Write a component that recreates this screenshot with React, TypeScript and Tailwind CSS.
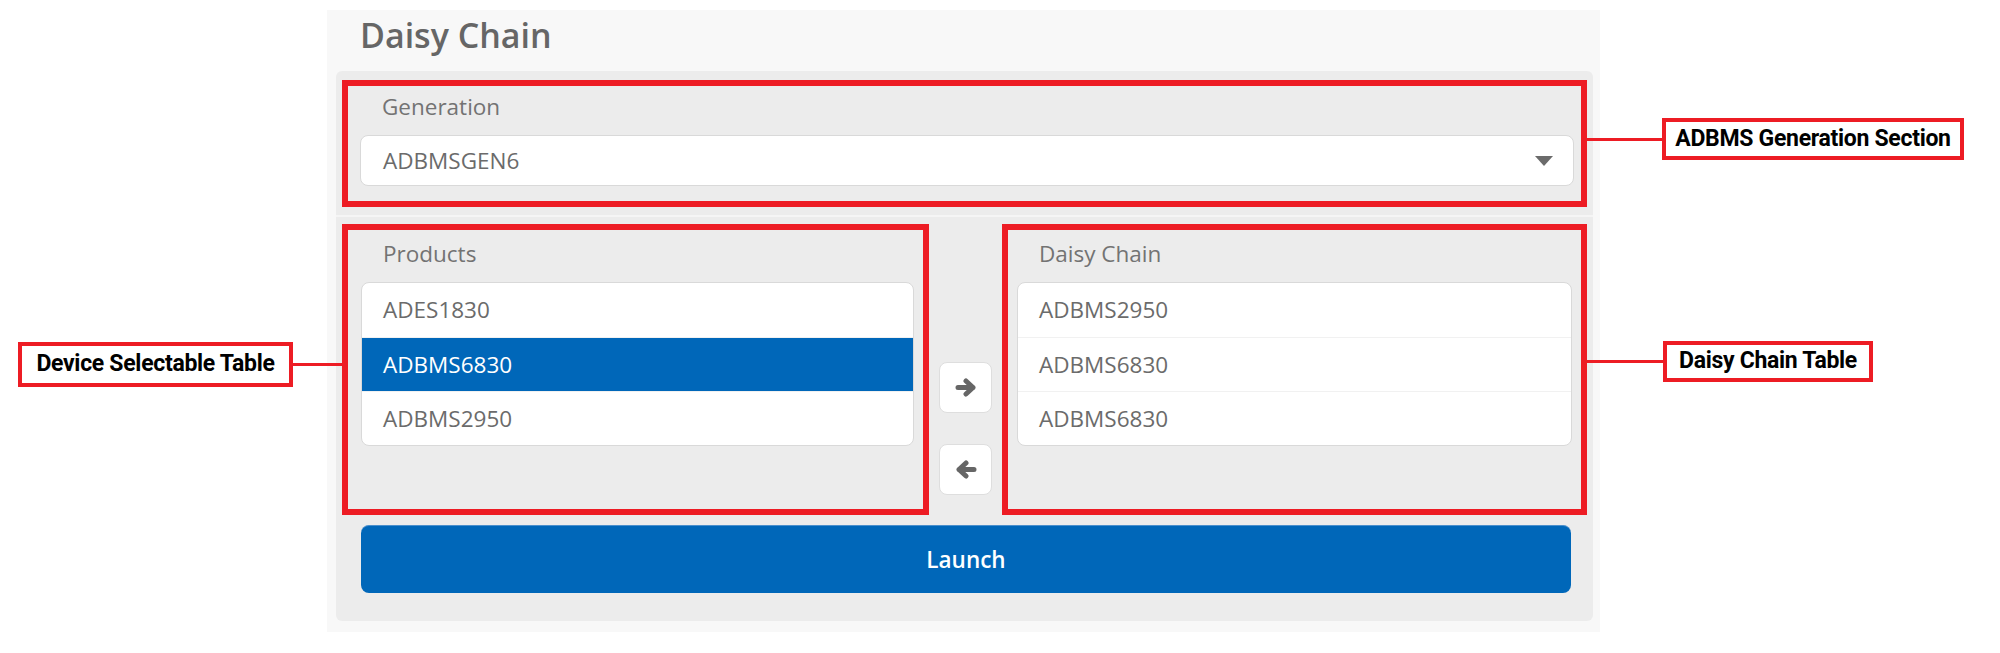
const PRODUCTS = ["ADES1830", "ADBMS6830", "ADBMS2950"];
const DAISY_CHAIN = ["ADBMS2950", "ADBMS6830", "ADBMS6830"];
const SELECTED_INDEX = 1;

function Callout({
  text,
  side,
  className,
  boxClassName,
  lineClassName,
}: {
  text: string;
  side: "left" | "right";
  className: string;
  boxClassName: string;
  lineClassName: string;
}) {
  const line = <div className={`h-[3px] shrink-0 bg-[#ed1c24] ${lineClassName}`} />;
  const box = (
    <div
      className={`flex shrink-0 items-center justify-center whitespace-nowrap border-[4px] border-[#ed1c24] bg-white font-['Roboto',sans-serif] text-[23px] font-bold tracking-[-0.3px] text-black ${boxClassName}`}
    >
      {text}
    </div>
  );
  return (
    <div className={`absolute z-10 flex items-center ${className}`}>
      {side === "left" ? (
        <>
          {box}
          {line}
        </>
      ) : (
        <>
          {line}
          {box}
        </>
      )}
    </div>
  );
}

function ListBox({ items, selected }: { items: string[]; selected?: number }) {
  return (
    <div className="overflow-hidden rounded-lg border border-[#d9d9d9] bg-white">
      {items.map((item, i) => (
        <div
          key={i}
          className={`flex h-[54px] items-center pl-[21px] text-[22.5px] ${
            i > 0 ? "border-t border-[#f1f1f1]" : ""
          } ${i === selected ? "bg-[#0067b9] text-white" : "text-[#6b6b6b]"}`}
        >
          {item}
        </div>
      ))}
    </div>
  );
}

// bold rounded arrow, like the font-awesome one in the screenshot
function Arrow({ dir }: { dir: "left" | "right" }) {
  return (
    <svg
      width="22"
      height="19"
      viewBox="0 0 22 19"
      className={dir === "left" ? "-scale-x-100" : ""}
    >
      <path
        d="M3 9.5 H18 M11 3 L18 9.5 L11 16"
        fill="none"
        stroke="#666"
        strokeWidth="5"
        strokeLinecap="round"
        strokeLinejoin="round"
      />
    </svg>
  );
}

function ArrowButton({ dir }: { dir: "left" | "right" }) {
  return (
    <button
      type="button"
      className="flex h-[51px] w-[53px] items-center justify-center rounded-lg border border-[#dedede] bg-white"
    >
      <Arrow dir={dir} />
    </button>
  );
}

export default function App() {
  return (
    <main className="min-h-[653px] bg-white pl-[327px] pt-[10px] font-['Open_Sans',sans-serif]">
      <div className="flex h-[622px] w-[1273px] flex-col bg-[#f8f8f8] pl-[9px] pr-[7px] pt-[3px]">
        <h1 className="ml-[24px] h-[45px] text-[34px] font-semibold leading-[45px] text-[#666]">
          Daisy Chain
        </h1>

        <div className="mt-[13px] flex h-[550px] flex-col rounded-md bg-[#ececec]">
          {/* generation */}
          <div className="border-b-2 border-[#f5f5f5] px-[6px] pb-[8px] pt-[9px]">
            <div className="relative border-[6px] border-[#ed1c24] pb-[15px] pl-[12px] pr-[7px] pt-[6px]">
              <div className="pl-[22px] text-[22.5px] leading-[30px] text-[#737373]">Generation</div>
              <div className="mt-[13px] flex h-[51px] items-center justify-between rounded-lg border border-[#d9d9d9] bg-white pl-[22px] pr-[20px] text-[22.5px] text-[#6b6b6b]">
                <span>ADBMSGEN6</span>
                <svg width="18" height="10" viewBox="0 0 18 10">
                  <path d="M0 0 H18 L9 10 Z" fill="#6b6b6b" />
                </svg>
              </div>
              <Callout
                text="ADBMS Generation Section"
                side="right"
                className="left-full top-[32px]"
                lineClassName="w-[81px]"
                boxClassName="h-[42px] w-[302px]"
              />
            </div>
          </div>

          {/* products / daisy chain */}
          <div className="flex px-[6px] pt-[7px]">
            <div className="relative h-[291px] w-[587px] shrink-0 border-[6px] border-[#ed1c24] pl-[13px] pr-[9px] pt-[9px]">
              <div className="pl-[22px] text-[22.5px] leading-[30px] text-[#737373]">Products</div>
              <div className="mt-[13px]">
                <ListBox items={PRODUCTS} selected={SELECTED_INDEX} />
              </div>
              <Callout
                text="Device Selectable Table"
                side="left"
                className="right-full top-[112px]"
                lineClassName="w-[55px]"
                boxClassName="h-[45px] w-[275px]"
              />
            </div>

            <div className="flex w-[73px] shrink-0 flex-col items-center gap-[31px] pt-[138px]">
              <ArrowButton dir="right" />
              <ArrowButton dir="left" />
            </div>

            <div className="relative h-[291px] flex-1 border-[6px] border-[#ed1c24] px-[9px] pt-[9px]">
              <div className="pl-[22px] text-[22.5px] leading-[30px] text-[#737373]">Daisy Chain</div>
              <div className="mt-[13px]">
                <ListBox items={DAISY_CHAIN} />
              </div>
              <Callout
                text="Daisy Chain Table"
                side="right"
                className="left-full top-[111px]"
                lineClassName="w-[82px]"
                boxClassName="h-[41px] w-[210px]"
              />
            </div>
          </div>

          <button
            type="button"
            className="ml-[25px] mr-[22px] mt-[10px] h-[68px] rounded-lg border-t border-[#4a8fcc] bg-[#0067b9] text-[22.5px] font-semibold text-white"
          >
            Launch
          </button>
        </div>
      </div>
    </main>
  );
}
